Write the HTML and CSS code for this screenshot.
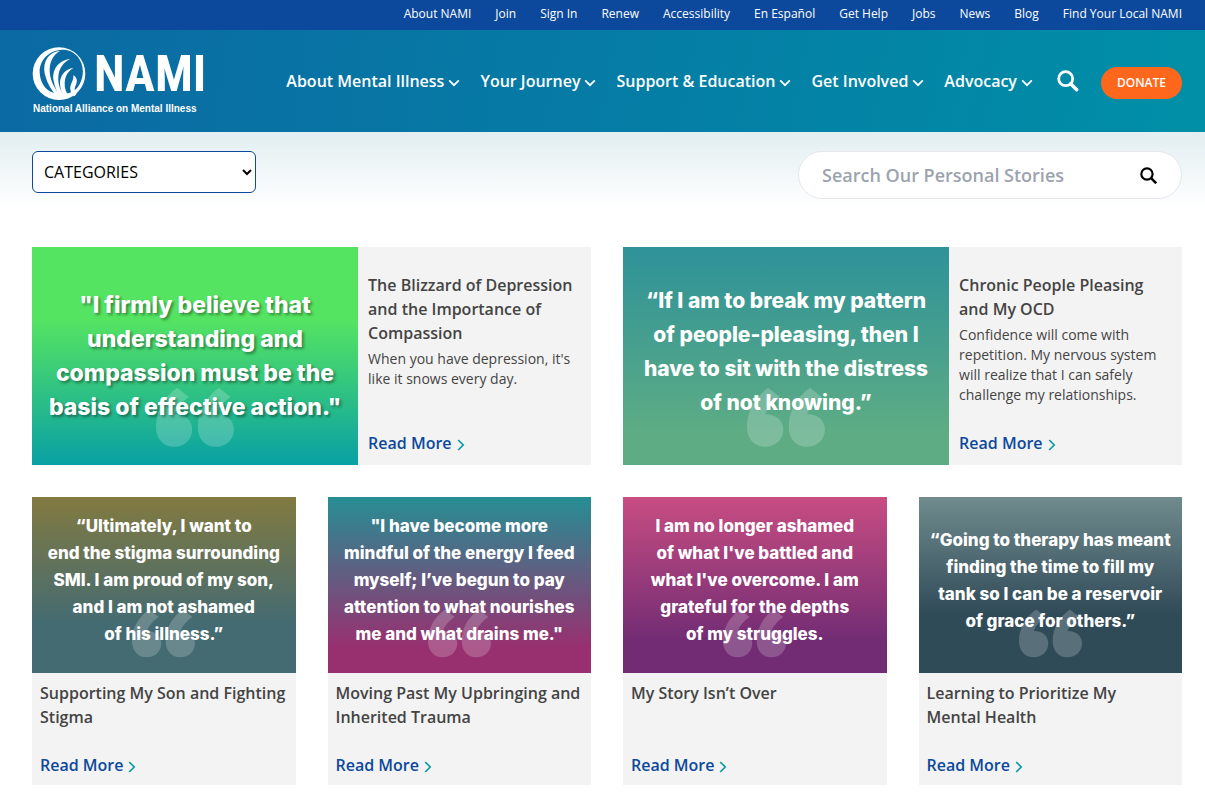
FILE: index.html
```html
<!DOCTYPE html>
<html lang="en">
<head>
<meta charset="utf-8">
<meta name="viewport" content="width=device-width, initial-scale=1">
<title>Personal Stories | NAMI</title>
<link rel="stylesheet" href="styles.css">
</head>
<body>
<svg class="defs" aria-hidden="true">
  <symbol id="chevron-down" viewBox="0 0 12 8"><path d="M1.2 1.4 6 6.2l4.800-4.800" fill="none" stroke="currentColor" stroke-width="1.800"/></symbol>
  <symbol id="chevron-right" viewBox="0 0 8 12"><path d="M1.200 1l5 5-5 5" fill="none" stroke="currentColor" stroke-width="1.700"/></symbol>
  <symbol id="search" viewBox="0 0 22 22"><circle cx="8.700" cy="8.700" r="7" fill="none" stroke="currentColor" stroke-width="2.800"/><path d="M13.700 13.700l6 6" stroke="currentColor" stroke-width="3.400" stroke-linecap="round"/></symbol>
  <symbol id="search-thin" viewBox="0 0 22 22"><circle cx="9" cy="9" r="7.300" fill="none" stroke="currentColor" stroke-width="2.800"/><path d="M14 14l7 7" stroke="currentColor" stroke-width="3.400"/></symbol>
  <symbol id="marks" viewBox="406 440 240 182">
    <path id="mark" d="M471 440L507 468C485 483 470 500 462 521C495 520 517 540 517 568C517 600 493 621 462 621C428 621 406 596 406 560C406 510 430 470 471 440Z"/>
    <use href="#mark" x="128"/>
  </symbol>
</svg>

<nav class="utility" aria-label="Utility">
  <a href="#">About NAMI</a><a href="#">Join</a><a href="#">Sign In</a><a href="#">Renew</a><a href="#">Accessibility</a><a href="#">En Español</a><a href="#">Get Help</a><a href="#">Jobs</a><a href="#">News</a><a href="#">Blog</a><a href="#">Find Your Local NAMI</a>
</nav>

<header class="header">
  <a class="logo" href="#">
    <span class="logo-top">
      <svg class="logo-globe" viewBox="38 32 162 162" aria-hidden="true">
        <path fill-rule="evenodd" d="M119 33a79 79 0 1 1 0 158a79 79 0 1 1 0-158ZM128 40C88 42 60 72 61 108C62 136 76 160 98 168C118 174 160 180 180 145C207 98 180 38 128 40Z"/>
        <path d="M123 43C84 48 68 80 78 118C84 142 96 162 112 178L124 178C104 155 90 128 91 98C92 74 103 54 123 43Z"/>
        <path d="M153 67C118 72 97 98 103 134C106 153 114 170 126 184L138 184C124 165 115 145 117 120C119 95 133 77 153 67Z"/>
        <path d="M163 94C137 98 121 118 122 143C123 162 130 178 140 187L152 184C141 171 135 156 136 140C137 118 147 103 163 94Z"/>
        <path d="M162 117C164 133 151 144 153 158C154 170 160 176 165 180L172 172C164 163 165 154 170 145C175 135 173 123 162 117Z"/>
      </svg>
      <span class="logo-name">NAMI</span>
    </span>
    <span class="logo-tag">National Alliance on Mental Illness</span>
  </a>
  <nav class="main-nav" aria-label="Main">
    <a href="#">About Mental Illness<svg><use href="#chevron-down"/></svg></a>
    <a href="#">Your Journey<svg><use href="#chevron-down"/></svg></a>
    <a href="#">Support &amp; Education<svg><use href="#chevron-down"/></svg></a>
    <a href="#">Get Involved<svg><use href="#chevron-down"/></svg></a>
    <a href="#">Advocacy<svg><use href="#chevron-down"/></svg></a>
    <button class="nav-search" type="button" aria-label="Search"><svg><use href="#search"/></svg></button>
    <a class="donate" href="#">DONATE</a>
  </nav>
</header>

<main class="stories">
  <form class="filters">
    <select class="categories" aria-label="Categories"><option>CATEGORIES</option></select>
    <div class="search-box">
      <input type="text" placeholder="Search Our Personal Stories" aria-label="Search Our Personal Stories">
      <button type="submit" aria-label="Submit search"><svg><use href="#search-thin"/></svg></button>
    </div>
  </form>

  <section class="featured">
    <article class="card card-wide">
      <div class="quote quote-green"><svg class="marks"><use href="#marks"/></svg><p>"I firmly believe that<br>understanding and<br>compassion must be the<br>basis of effective action."</p></div>
      <div class="card-body">
        <h2>The Blizzard of Depression and the Importance of Compassion</h2>
        <p>When you have depression, it's like it snows every day.</p>
        <a class="more" href="#">Read More<svg><use href="#chevron-right"/></svg></a>
      </div>
    </article>
    <article class="card card-wide">
      <div class="quote quote-sea"><svg class="marks"><use href="#marks"/></svg><p>“If I am to break my pattern<br>of people-pleasing, then I<br>have to sit with the distress<br>of not knowing.”</p></div>
      <div class="card-body">
        <h2>Chronic People Pleasing and My OCD</h2>
        <p>Confidence will come with repetition. My nervous system will realize that I can safely challenge my relationships.</p>
        <a class="more" href="#">Read More<svg><use href="#chevron-right"/></svg></a>
      </div>
    </article>
  </section>

  <section class="grid">
    <article class="card">
      <div class="quote quote-olive"><svg class="marks"><use href="#marks"/></svg><p>“Ultimately, I want to<br>end the stigma surrounding<br>SMI. I am proud of my son,<br>and I am not ashamed<br>of his illness.”</p></div>
      <div class="card-body">
        <h2>Supporting My Son and Fighting Stigma</h2>
        <a class="more" href="#">Read More<svg><use href="#chevron-right"/></svg></a>
      </div>
    </article>
    <article class="card">
      <div class="quote quote-berry"><svg class="marks"><use href="#marks"/></svg><p>"I have become more<br>mindful of the energy I feed<br>myself; I’ve begun to pay<br>attention to what nourishes<br>me and what drains me."</p></div>
      <div class="card-body">
        <h2>Moving Past My Upbringing and Inherited Trauma</h2>
        <a class="more" href="#">Read More<svg><use href="#chevron-right"/></svg></a>
      </div>
    </article>
    <article class="card">
      <div class="quote quote-plum"><svg class="marks"><use href="#marks"/></svg><p>I am no longer ashamed<br>of what I've battled and<br>what I've overcome. I am<br>grateful for the depths<br>of my struggles.</p></div>
      <div class="card-body">
        <h2>My Story Isn’t Over</h2>
        <a class="more" href="#">Read More<svg><use href="#chevron-right"/></svg></a>
      </div>
    </article>
    <article class="card">
      <div class="quote quote-slate"><svg class="marks"><use href="#marks"/></svg><p>“Going to therapy has meant<br>finding the time to fill my<br>tank so I can be a reservoir<br>of grace for others.”</p></div>
      <div class="card-body">
        <h2>Learning to Prioritize My Mental Health</h2>
        <a class="more" href="#">Read More<svg><use href="#chevron-right"/></svg></a>
      </div>
    </article>
  </section>
</main>
</body>
</html>
```
FILE: styles.css
```css
* { box-sizing: border-box; }

body {
  margin: 0;
  background: #fff;
  color: #444;
  font: 16px/24px "Open Sans", "Noto Sans", sans-serif;
}

a { color: inherit; text-decoration: none; }
h2, p { margin: 0; }
button { padding: 0; border: 0; background: none; color: inherit; cursor: pointer; }
.defs { position: absolute; width: 0; height: 0; }

.utility {
  display: flex;
  justify-content: flex-end;
  gap: 24px;
  height: 30px;
  padding: 0 23px 2px;
  align-items: center;
  background: #0c499c;
  color: #fff;
  font-size: 12px;
}

.header {
  display: flex;
  justify-content: space-between;
  align-items: center;
  height: 102px;
  padding: 0 23px 0 32px;
  background: linear-gradient(100deg, #0b69a3, #008fa7);
  color: #fff;
}

.logo { display: flex; flex-direction: column; }
.logo-top { display: flex; align-items: center; gap: 8px; height: 54px; }
.logo-globe { width: 54px; height: 54px; fill: #fff; }
.logo-name { font: bold 50px/52px "Roboto Condensed", "Open Sans Condensed", "Liberation Sans", sans-serif; }
.logo-tag { padding: 1px 0 0 1px; font: bold 10px/14px "Liberation Sans", Arial, sans-serif; }

.main-nav { display: flex; align-items: center; gap: 20px; font-weight: 600; }
.main-nav a svg { width: 12px; height: 8px; margin-left: 4px; }
.nav-search { height: 24px; margin-left: 4px; }
.nav-search svg { display: block; width: 22px; height: 22px; }
.main-nav .donate {
  margin: 4px 0 0 2px;
  padding: 0 16px;
  border-radius: 16px;
  background: #ff671d;
  font-size: 12px;
  line-height: 32px;
}

.stories {
  padding: 19px 23px 13px 32px;
  background: linear-gradient(#e2eef1, #fff 75px);
}

.filters {
  display: flex;
  justify-content: space-between;
  align-items: flex-start;
  margin-bottom: 48px;
}
.categories {
  width: 224px;
  height: 42px;
  padding: 0 8px 0 7px;
  border: 1px solid #0c499c;
  border-radius: 6px;
  background: #fff;
  color: #000;
  font: inherit;
}
.search-box {
  display: flex;
  align-items: center;
  width: 384px;
  height: 48px;
  padding: 0 24px 0 23px;
  border: 1px solid #e5e7eb;
  border-radius: 24px;
  background: #fff;
  color: #000;
}
.search-box input {
  flex: 1;
  min-width: 0;
  padding: 0;
  border: 0;
  outline: 0;
  background: none;
  font: 600 18px/24px "Open Sans", "Noto Sans", sans-serif;
}
.search-box input::placeholder { color: #9ca3af; opacity: 1; }
.search-box svg { display: block; width: 17px; height: 17px; }

.featured { display: grid; grid-template-columns: repeat(2, minmax(0, 1fr)); gap: 32px; margin-bottom: 32px; }
.grid { display: grid; grid-template-columns: repeat(4, minmax(0, 1fr)); gap: 32px; }

.card { display: flex; flex-direction: column; background: #f3f3f3; }
.card-wide { display: grid; grid-template-columns: minmax(0, 7fr) minmax(0, 5fr); }
.card-body { display: flex; flex-direction: column; flex: 1; padding: 8px; }
.card-body h2 { min-height: 48px; margin-bottom: 24px; font-size: 16px; font-weight: 600; }
.card-body p { font-size: 14px; line-height: 20px; }
.card-wide .card-body { padding: 26px 10px 10px; }
.card-wide h2 { margin-bottom: 4px; }
.more { margin-top: auto; color: #0c499c; font-weight: 600; }
.more svg { width: 8px; height: 12px; margin-left: 5px; color: #089ba5; vertical-align: -2px; }

.quote {
  position: relative;
  display: flex;
  align-items: center;
  justify-content: center;
  aspect-ratio: 3 / 2;
  padding-bottom: 8px;
  color: #fff;
  text-align: center;
  white-space: nowrap;
}
.quote p { position: relative; font: 800 17px/27px Inter, sans-serif; }
.card-wide .quote { aspect-ratio: 326 / 218; }
.card-wide .quote p { font-size: 21px; line-height: 34px; }
.card-wide .quote-green p { font-size: 23px; }
.marks {
  position: absolute;
  left: 38%;
  bottom: 8%;
  width: 24%;
  height: 28%;
  fill: rgba(255, 255, 255, 0.2);
}
.card-wide .quote-green { padding-bottom: 0; background: linear-gradient(#55e462 33%, #09a0a4); text-shadow: 2px 2px 3px rgba(0, 0, 0, 0.4); }
.quote-sea { background: linear-gradient(#2e9299, #5dac84 85%); }
.quote-olive { background: linear-gradient(#827a40, #446b72 72%); }
.quote-berry { background: linear-gradient(#268e93, #983070 85%); }
.quote-plum { background: linear-gradient(#c74d82, #722c74 82%); }
.quote-slate { background: linear-gradient(#708b8d, #304b58 67%); }
```
